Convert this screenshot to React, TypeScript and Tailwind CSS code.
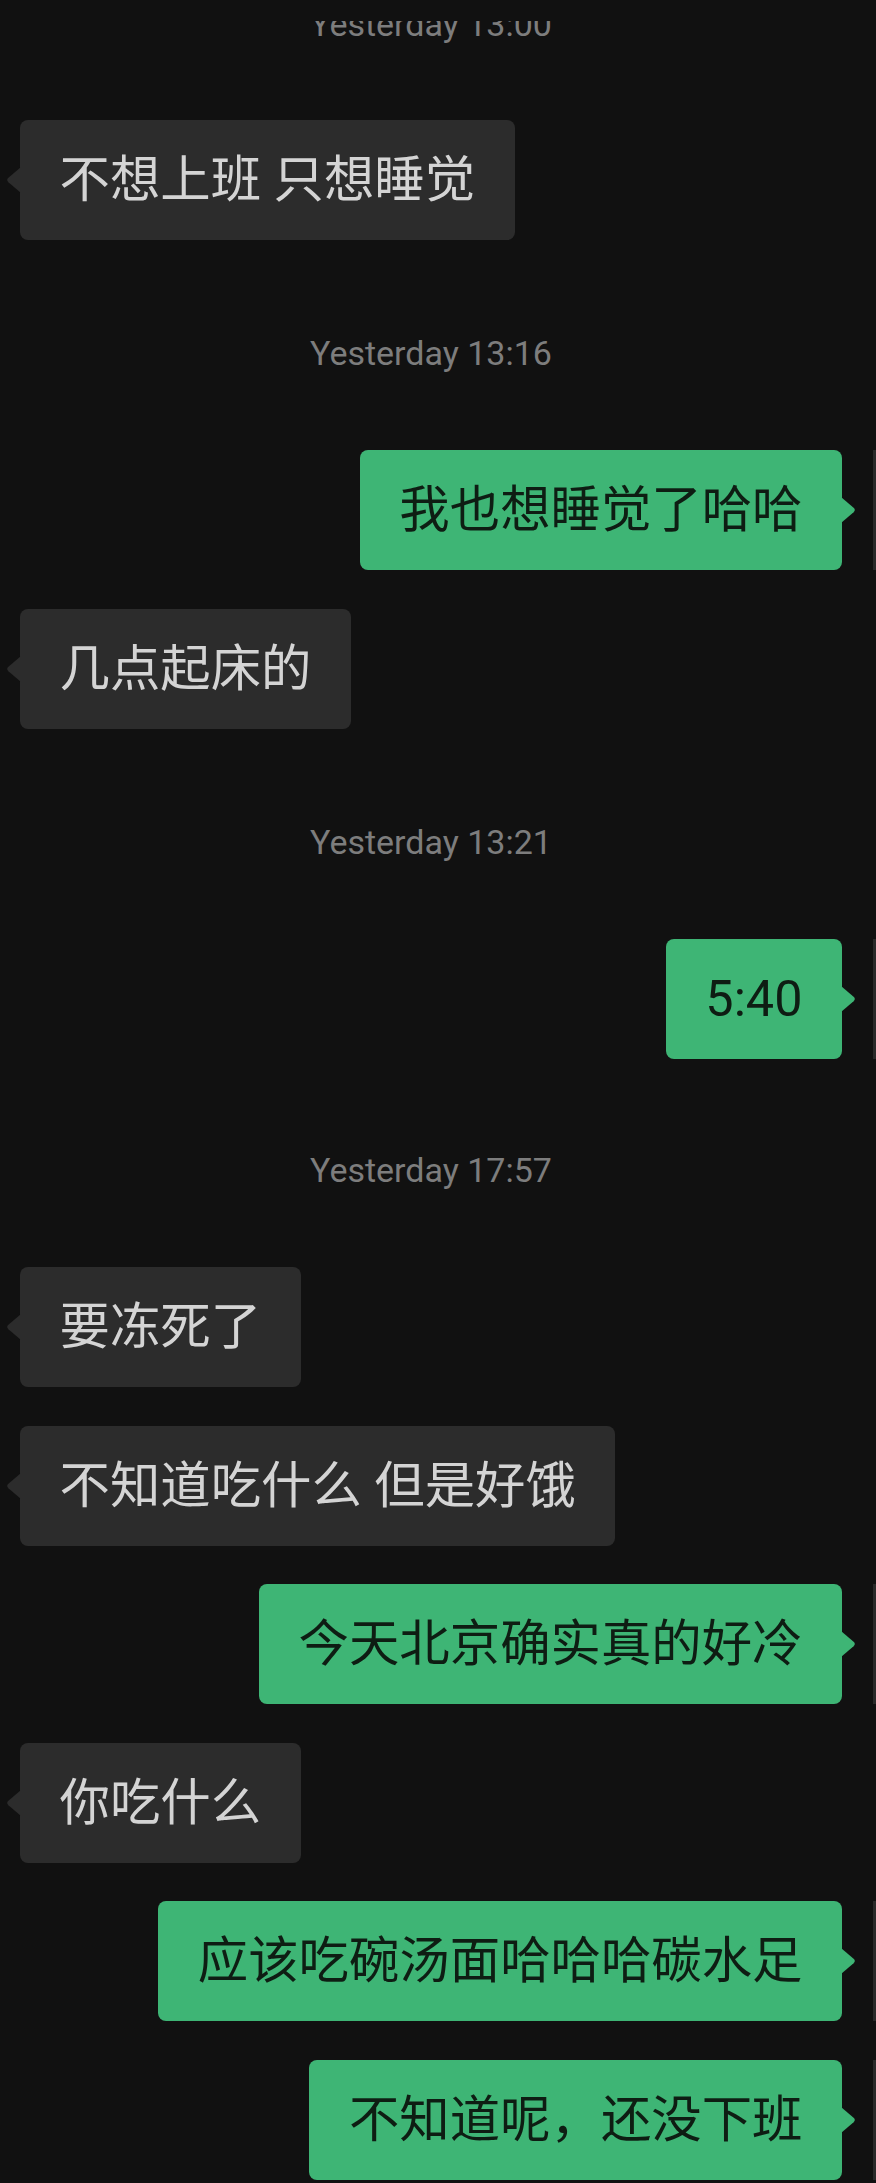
import React from "react";

type Msg =
  | { kind: "time"; text: string; mt: string }
  | { kind: "left" | "right"; text: string; mt: string };

const messages: Msg[] = [
  { kind: "time", text: "Yesterday 13:00", mt: "mt-[4px]" },
  { kind: "left", text: "不想上班 只想睡觉", mt: "mt-[76px]" },
  { kind: "time", text: "Yesterday 13:16", mt: "mt-[93px]" },
  { kind: "right", text: "我也想睡觉了哈哈", mt: "mt-[77px]" },
  { kind: "left", text: "几点起床的", mt: "mt-[39px]" },
  { kind: "time", text: "Yesterday 13:21", mt: "mt-[93px]" },
  { kind: "right", text: "5:40", mt: "mt-[77px]" },
  { kind: "time", text: "Yesterday 17:57", mt: "mt-[91px]" },
  { kind: "left", text: "要冻死了", mt: "mt-[77px]" },
  { kind: "left", text: "不知道吃什么 但是好饿", mt: "mt-[38.6px]" },
  { kind: "right", text: "今天北京确实真的好冷", mt: "mt-[38.6px]" },
  { kind: "left", text: "你吃什么", mt: "mt-[38.6px]" },
  { kind: "right", text: "应该吃碗汤面哈哈哈碳水足", mt: "mt-[38.6px]" },
  { kind: "right", text: "不知道呢，还没下班", mt: "mt-[38.6px]" },
];

function TimeLabel({ text, mt }: { text: string; mt: string }) {
  return (
    <div className={`${mt} pr-[14px] flex justify-center`}>
      <span className="text-[34px] leading-[40px] text-[#7d7d7d] [font-family:Roboto,'Liberation_Sans',sans-serif]">
        {text}
      </span>
    </div>
  );
}

function Bubble({ text, mine, mt }: { text: string; mine: boolean; mt: string }) {
  if (mine) {
    return (
      <div className={`${mt} flex justify-end items-start`}>
        <div className="relative h-[120px] px-[39.5px] flex items-center rounded-lg bg-[#3eb575] text-[#0e1d13]">
          <span className="whitespace-pre text-[50.4px] leading-[70px]">{text}</span>
          {/* tail */}
          <svg
            className="absolute right-[-14px] top-[47px] w-[15px] h-[26px] fill-[#3eb575]"
            viewBox="0 0 15 26"
          >
            <path d="M0 0 L12.6 10.8 Q15 13 12.6 15.2 L0 26 Z" />
          </svg>
        </div>
        <div className="ml-[31px] w-[3px] h-[120px] bg-[#2a2a2a]" />
      </div>
    );
  }

  return (
    <div className={`${mt} flex justify-start pl-[20px]`}>
      <div className="relative h-[120px] px-[39.5px] flex items-center rounded-lg bg-[#2c2c2c] text-[#d4d4d4]">
        <svg
          className="absolute left-[-14px] top-[47px] w-[15px] h-[26px] fill-[#2c2c2c]"
          viewBox="0 0 15 26"
        >
          <path d="M15 0 L2.4 10.8 Q0 13 2.4 15.2 L15 26 Z" />
        </svg>
        <span className="whitespace-pre text-[50.4px] leading-[70px]">{text}</span>
      </div>
    </div>
  );
}

export default function App() {
  return (
    <div className="relative w-full h-[2183px] overflow-hidden bg-[#111111] [font-family:Roboto,'Noto_Sans_CJK_SC',sans-serif]">
      {messages.map((m, i) =>
        m.kind === "time" ? (
          <TimeLabel key={i} text={m.text} mt={m.mt} />
        ) : (
          <Bubble key={i} text={m.text} mine={m.kind === "right"} mt={m.mt} />
        )
      )}

      {/* top bar covering the clipped timestamp */}
      <div className="absolute top-0 left-0 right-0 h-[21px] bg-[#111111]" />
    </div>
  );
}
